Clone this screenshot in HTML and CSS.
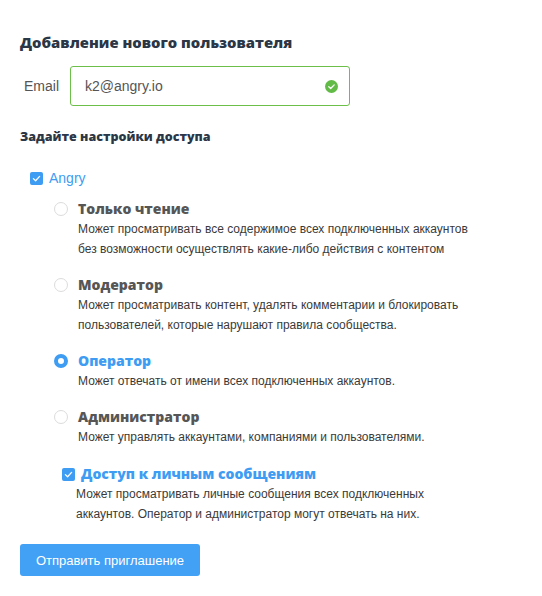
FILE: index.html
```html
<!DOCTYPE html>
<html lang="ru">
<head>
<meta charset="utf-8">
<link rel="stylesheet" href="styles.css">
</head>
<body>
<div class="page">
  <h1 class="title">Добавление нового пользователя</h1>
  <div class="email-row">
    <label class="email-label">Email</label>
    <div class="input">
      <span class="input-text">k2@angry.io</span>
      <svg class="ok" width="13" height="13" viewBox="0 0 13 13"><circle cx="6.5" cy="6.5" r="6.5" fill="#63bb47"/><path d="M3.8 6.7l1.9 1.8 3.5-3.6" fill="none" stroke="#fff" stroke-width="1.3" stroke-linecap="round" stroke-linejoin="round"/></svg>
    </div>
  </div>
  <h2 class="subtitle">Задайте настройки доступа</h2>
  <div class="account">
    <span class="cb"><svg width="13" height="13" viewBox="0 0 13 13"><rect width="13" height="13" rx="2" fill="#3e9cf2"/><path d="M3.4 6.6l2.2 2.1 4-4.3" fill="none" stroke="#fff" stroke-width="1.3" stroke-linecap="round" stroke-linejoin="round"/></svg></span>
    <span class="account-name">Angry</span>
  </div>
  <div class="roles">
    <div class="role">
      <span class="radio"></span>
      <div class="role-body">
        <div class="role-name">Только чтение</div>
        <div class="role-desc">Может просматривать все содержимое всех подключенных аккаунтов<br>без возможности осуществлять какие-либо действия с контентом</div>
      </div>
    </div>
    <div class="role">
      <span class="radio"></span>
      <div class="role-body">
        <div class="role-name">Модератор</div>
        <div class="role-desc">Может просматривать контент, удалять комментарии и блокировать<br>пользователей, которые нарушают правила сообщества.</div>
      </div>
    </div>
    <div class="role">
      <span class="radio checked"></span>
      <div class="role-body">
        <div class="role-name active">Оператор</div>
        <div class="role-desc">Может отвечать от имени всех подключенных аккаунтов.</div>
      </div>
    </div>
    <div class="role">
      <span class="radio"></span>
      <div class="role-body">
        <div class="role-name">Администратор</div>
        <div class="role-desc">Может управлять аккаунтами, компаниями и пользователями.</div>
      </div>
    </div>
  </div>
  <div class="dm">
    <div class="dm-head">
      <span class="cb"><svg width="13" height="13" viewBox="0 0 13 13"><rect width="13" height="13" rx="2" fill="#3e9cf2"/><path d="M3.4 6.6l2.2 2.1 4-4.3" fill="none" stroke="#fff" stroke-width="1.3" stroke-linecap="round" stroke-linejoin="round"/></svg></span>
      <span class="dm-name">Доступ к личным сообщениям</span>
    </div>
    <div class="dm-desc">Может просматривать личные сообщения всех подключенных<br>аккаунтов. Оператор и администратор могут отвечать на них.</div>
  </div>
  <button class="submit">Отправить приглашение</button>
</div>
</body>
</html>
```

FILE: styles.css
```css
* { box-sizing: border-box; }
html, body { margin: 0; padding: 0; background: #fff; }
body { font-family: "Open Sans", "DejaVu Sans", sans-serif; color: #3a3a3a; }
.page { padding: 31px 20px 0 20px; }
.title { margin: 0; font-size: 14.8px; font-weight: 800; color: #2b3646; line-height: 22px; }
.email-row { display: flex; align-items: center; margin-top: 13px; }
.email-label { font-family: "Liberation Sans", Arial, sans-serif; font-size: 14px; color: #555; width: 50px; padding-left: 4px; }
.input { width: 280px; height: 40px; border: 1px solid #6cc04a; border-radius: 3px; display: flex; align-items: center; justify-content: space-between; padding: 0 11px 0 14px; }
.input-text { font-family: "Liberation Sans", Arial, sans-serif; font-size: 14px; color: #555; }
.ok { display: block; }
.subtitle { margin: 22px 0 0 0; font-size: 12.5px; font-weight: 800; color: #2b3646; line-height: 18px; }
.account { display: flex; align-items: center; margin: 24px 0 0 10px; }
.cb { display: block; width: 13px; height: 13px; }
.cb svg { display: block; }
.account-name { margin-left: 6px; font-family: "Liberation Sans", Arial, sans-serif; font-size: 14px; color: #3e9cf2; line-height: 16px; }
.roles { margin-left: 34px; margin-top: 14px; display: flex; flex-direction: column; gap: 17px; }
.role { display: flex; align-items: flex-start; }
.radio { width: 14px; height: 14px; border-radius: 50%; border: 1px solid #dcdcdc; margin-top: 2px; flex: none; background: #fff; }
.radio.checked { border: 4px solid #3e9cf2; }
.role-body { margin-left: 10px; }
.role-name { font-size: 14px; font-weight: 800; color: #565656; line-height: 18px; }
.role-name.active { color: #3e9cf2; }
.role-desc { font-family: "Liberation Sans", Arial, sans-serif; font-size: 12px; color: #3a3a3a; line-height: 20px; margin-top: 1px; }
.dm { margin-left: 42px; margin-top: 18px; }
.dm-head { display: flex; align-items: center; }
.dm-name { margin-left: 6px; font-size: 14px; font-weight: 800; color: #3e9cf2; line-height: 18px; }
.dm-desc { margin-left: 14px; font-family: "Liberation Sans", Arial, sans-serif; font-size: 12px; color: #3a3a3a; line-height: 20px; margin-top: 1px; }
.submit { margin-top: 20px; width: 180px; height: 32px; border: none; border-radius: 3px; background: #42a0f5; color: #fff; font-family: "Liberation Sans", Arial, sans-serif; font-size: 13px; padding: 0; }
```
